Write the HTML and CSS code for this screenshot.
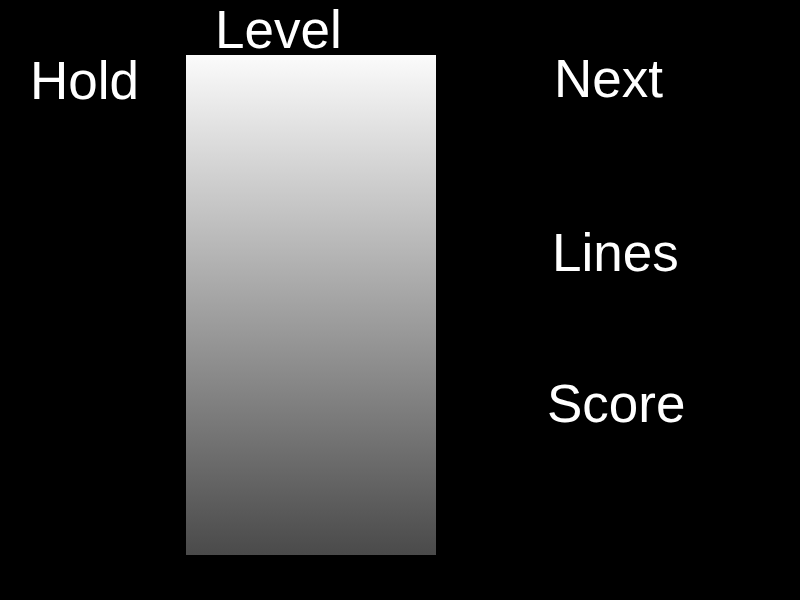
FILE: index.html
```html
<!DOCTYPE html>
<html lang="en">
<head>
    <meta charset="UTF-8">
    <title>Tetris</title>
    <link rel="stylesheet" href="styles.css">
</head>
<body>
<div id="game">
    <div class="col col-hold">
        <div class="label">Hold</div>
    </div>
    <div class="col col-board">
        <div class="label level">Level</div>
        <div class="board"></div>
    </div>
    <div class="col col-info">
        <div class="label next">Next</div>
        <div class="label lines">Lines</div>
        <div class="label score">Score</div>
    </div>
</div>
</body>
</html>
```

FILE: styles.css
```css
* {
    padding: 0;
    margin: 0;
}

body {
    background-color: #000;
    color: #fff;
    font-family: "Liberation Sans", Arial, sans-serif;
}

#game {
    width: 800px;
    height: 600px;
    display: flex;
}

.label {
    font-size: 53px;
    line-height: 54px;
}

.col-hold {
    width: 156px;
    padding-left: 30px;
    padding-top: 54px;
}

.col-board {
    width: 250px;
    padding-top: 5px;
}

.level {
    line-height: 49px;
    padding-left: 29px;
}

.board {
    width: 250px;
    height: 500px;
    margin-top: 1px;
    /*从上到下由白变灰*/
    background: linear-gradient(#fbfbfb, #4a4a4a);
}

.col-info {
    padding-left: 110px;
    padding-top: 52px;
    display: flex;
    flex-direction: column;
    align-items: flex-start;
}

.next {
    margin-left: 8px;
}

.lines {
    margin-top: 120px;
    margin-left: 6px;
}

.score {
    margin-top: 97px;
    margin-left: 1px;
}
```
